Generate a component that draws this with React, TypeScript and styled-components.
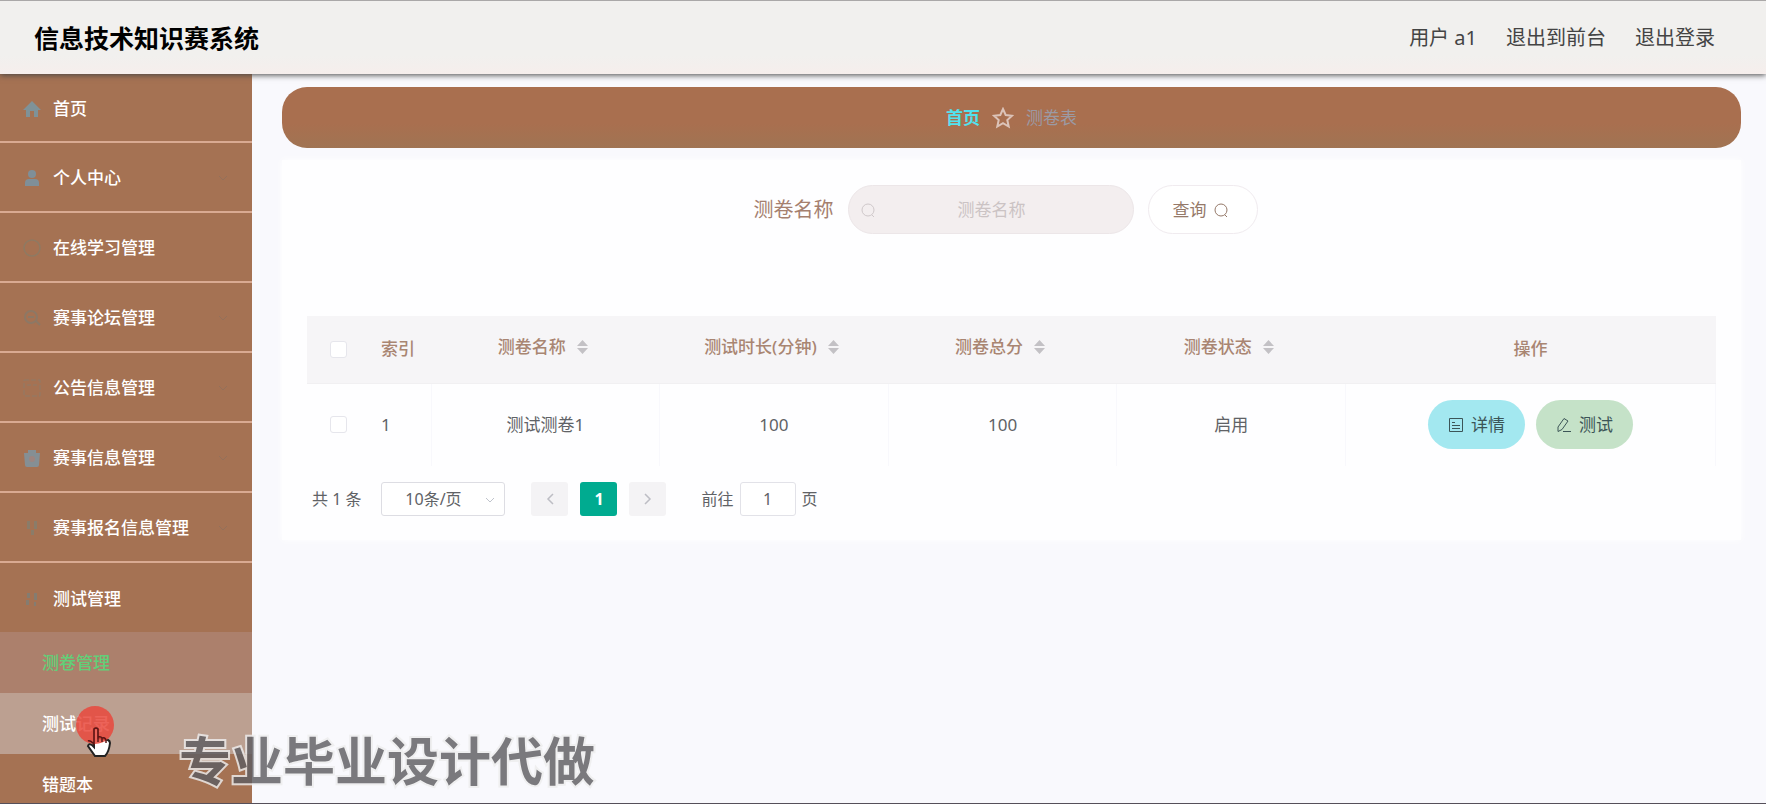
import React from 'react';
import styled, { createGlobalStyle, css } from 'styled-components';

const brown = '#a57253';

const GlobalStyle = createGlobalStyle`
  *, *::before, *::after { box-sizing: border-box; }
  html, body { margin: 0; }
  body {
    background: #f9f9fd;
    color: #606266;
    font-family: "Noto Sans", "Noto Sans CJK SC", sans-serif;
    font-size: 17px;
    line-height: 24px;
  }
  button, input, select { font: inherit; color: inherit; margin: 0; }
  a { color: inherit; text-decoration: none; }
`;

const Page = styled.div`
  position: relative;
  display: flex;
  flex-direction: column;
  height: 100vh;
  overflow: hidden;
  border-bottom: 1px solid #55505a;
`;

const Header = styled.header`
  flex: none;
  z-index: 1;
  display: flex;
  align-items: center;
  justify-content: space-between;
  height: 74px;
  padding: 0 51px 0 34px;
  border-top: 1px solid #aaa8a8;
  background: linear-gradient(#f1f0ee 75%, #f6eeec);
  box-shadow: 0 1px 6px #444;
`;

const Title = styled.h1`
  margin: 0;
  color: #000;
  font-size: 25px;
  line-height: 32px;
`;

const UserNav = styled.nav`
  display: flex;
  gap: 29px;
  color: #444;
  font-size: 20px;
  line-height: 28px;
`;

const Body = styled.div`
  flex: 1;
  display: flex;
  min-height: 0;
`;

const Sidebar = styled.nav`
  flex: none;
  width: 252px;
  overflow: hidden;
  background: ${brown};
  color: #fff;
  font-weight: 500;
`;

const MenuLink = styled.a<{ $plain?: boolean }>`
  display: flex;
  align-items: center;
  gap: 12px;
  height: ${p => (p.$plain ? 69 : 70)}px;
  padding: 2px 23px 0;
  ${p => !p.$plain && css`border-bottom: 2px solid #d9aa92;`}
  &:first-child { height: 69px; }
`;

const MenuIcon = styled.svg<{ $tone: string }>`
  flex: none;
  width: 18px;
  height: 18px;
  color: ${p => p.$tone};
`;

const MenuText = styled.span`
  flex: 1;
  white-space: nowrap;
`;

const Arrow = styled.svg`
  flex: none;
  width: 12px;
  height: 8px;
  color: #94705a;
`;

const SubLink = styled.a<{ $state?: 'active' | 'hover' }>`
  display: flex;
  align-items: center;
  height: 61px;
  padding-left: 42px;
  ${p => p.$state === 'active' && css`background: #ac806c; color: #62cf78;`}
  ${p => p.$state === 'hover' && css`background: #bca091;`}
`;

const Main = styled.main`
  flex: 1;
  min-width: 0;
  padding: 13px 25px 12px 30px;
`;

const Breadcrumb = styled.nav`
  display: flex;
  align-items: center;
  justify-content: center;
  gap: 12px;
  height: 61px;
  border-radius: 25px;
  background: linear-gradient(#a96f4f 60%, #a07453);
  color: #9b9aa4;
`;

const HomeLink = styled.a`
  color: #52e2ee;
  font-weight: 700;
`;

const Card = styled.section`
  margin-top: 12px;
  padding: 25px 25px 24px;
  background: #fefeff;
  box-shadow: 0 0 8px #fff;
`;

const SearchForm = styled.form`
  display: flex;
  align-items: center;
  justify-content: center;
  gap: 14px;
  margin-bottom: 82px;
  padding-right: 12px;
`;

const SearchLabel = styled.label`
  color: #a5806f;
  font-size: 20px;
  line-height: 28px;
`;

const SearchBox = styled.div`
  display: flex;
  align-items: center;
  width: 286px;
  height: 49px;
  padding: 0 11px;
  border: 1px solid #ece6e8;
  border-radius: 25px;
  background: #f3eeef;
  color: #cfc8ca;
`;

const SearchInput = styled.input`
  flex: 1;
  min-width: 0;
  padding: 0 14px 0 0;
  border: 0;
  outline: 0;
  background: transparent;
  text-align: center;
  &::placeholder { color: #cbc3c4; opacity: 1; }
`;

const SearchButton = styled.button`
  display: flex;
  align-items: center;
  justify-content: center;
  gap: 6px;
  width: 110px;
  height: 49px;
  padding: 0 10px 0 6px;
  border: 1px solid #f0ebef;
  border-radius: 25px;
  background: #fff;
  color: #957969;
`;

const Ring = styled.svg`
  flex: none;
  width: 16px;
  height: 16px;
`;

const Table = styled.table`
  width: 100%;
  border-collapse: collapse;
  table-layout: fixed;
`;

const Th = styled.th<{ $left?: boolean }>`
  height: 67px;
  padding: 0 12px;
  background: #f6f5f7;
  border-bottom: 1px solid #f1f0f2;
  color: #a98572;
  font-weight: 500;
  text-align: ${p => (p.$left ? 'left' : 'center')};
  white-space: nowrap;
`;

const Td = styled.td<{ $left?: boolean }>`
  height: 83px;
  padding: 0 12px;
  border-right: 1px solid #f8f8fc;
  text-align: ${p => (p.$left ? 'left' : 'center')};
  &:first-child { border-right: 0; }
`;

const Col = styled.col<{ $width?: number }>`
  width: ${p => (p.$width ? `${p.$width}px` : 'auto')};
`;

const CheckBox = styled.input`
  display: block;
  appearance: none;
  width: 17px;
  height: 17px;
  margin: 0 auto;
  border: 1px solid #e6e6ec;
  border-radius: 3px;
  background: #fff;
`;

const SortButton = styled.button`
  display: inline-flex;
  align-items: center;
  gap: 10px;
  padding: 0 4px 4px 0;
  border: 0;
  background: none;
`;

const SortIcon = styled.svg`
  width: 13px;
  height: 14px;
  color: #c3c1c5;
`;

const Actions = styled.div`
  display: flex;
  justify-content: center;
  gap: 11px;
`;

const ActionButton = styled.button<{ $bg: string }>`
  display: flex;
  align-items: center;
  justify-content: center;
  gap: 7px;
  width: 97px;
  height: 49px;
  padding: 0;
  border: 0;
  border-radius: 25px;
  background: ${p => p.$bg};
  color: #3c5557;
`;

const Pagination = styled.div`
  display: flex;
  align-items: center;
  margin-top: 16px;
  padding-left: 5px;
  font-size: 16px;
`;

const Total = styled.span`
  margin-right: 20px;
`;

const SizeWrap = styled.div`
  position: relative;
  width: 124px;
  margin-right: 26px;
`;

const SizeSelect = styled.select`
  appearance: none;
  display: block;
  width: 100%;
  height: 34px;
  padding: 0 20px 0 0;
  border: 1px solid #dddde3;
  border-radius: 3px;
  background: #fff;
  text-align: center;
  text-align-last: center;
`;

const SelectArrow = styled(Arrow)`
  position: absolute;
  right: 9px;
  top: 14px;
  color: #c0c4cc;
  pointer-events: none;
`;

const PageButton = styled.button<{ $active?: boolean }>`
  display: flex;
  align-items: center;
  justify-content: center;
  width: 37px;
  height: 34px;
  margin-right: 12px;
  padding: 0;
  border: 0;
  border-radius: 3px;
  background: ${p => (p.$active ? '#00ab90' : '#f4f3f5')};
  color: ${p => (p.$active ? '#fff' : '#bdbdc4')};
  font-weight: 700;
`;

const Jump = styled.label`
  display: flex;
  align-items: center;
  gap: 6px;
  margin-left: 23px;
`;

const JumpInput = styled.input`
  width: 56px;
  height: 34px;
  padding: 0;
  border: 1px solid #e2e2e8;
  border-radius: 3px;
  background: #fff;
  text-align: center;
`;

const Watermark = styled.div`
  position: absolute;
  left: 179px;
  bottom: 4px;
  color: #5f5e62;
  font-size: 52px;
  font-weight: 700;
  line-height: 76px;
  white-space: nowrap;
  -webkit-text-stroke: 4px #eeeeee;
  paint-order: stroke fill;
  opacity: 0.82;
  pointer-events: none;
`;

const Pointer = styled.svg`
  position: absolute;
  left: 75px;
  top: 705px;
  width: 42px;
  height: 54px;
  pointer-events: none;
`;

type IconName = 'home' | 'user' | 'circle' | 'chat' | 'frame' | 'bag' | 'trophy' | 'sliders';

const drawings: Record<IconName, React.ReactNode> = {
  home: <path d="M9 1 0 10h3v7h4v-6h4v6h4v-7h3z" fill="currentColor" />,
  user: (
    <g fill="currentColor">
      <circle cx="9" cy="5" r="4" />
      <path d="M2 17v-3q0-4 4-4h6q4 0 4 4v3z" />
    </g>
  ),
  circle: <circle cx="9" cy="9" r="8" fill="none" stroke="currentColor" strokeWidth="1.500" />,
  chat: (
    <g fill="none" stroke="currentColor" strokeWidth="2">
      <circle cx="8" cy="8" r="6" />
      <path d="M5 8h6M13 12l4 4" />
    </g>
  ),
  frame: <path d="M1 1h16v16H1zM4 6h4M10 6h4" fill="none" stroke="currentColor" strokeDasharray="5 2" />,
  bag: (
    <g>
      <path d="M1 4h16l-1 12q0 2-2 2H4q-2 0-2-2zM5 1h8v3H5z" fill="currentColor" />
      <circle cx="9" cy="10" r="3" fill="#9d8580" />
    </g>
  ),
  trophy: <path d="M4 2h3v8H4zM11 2h3v8h-3zM8 11h3v5H8z" fill="currentColor" />,
  sliders: <path d="M4 3h3v5H4zM3 10h3v5H3zM11 3h3v7h-3zM11 12h2v4h-2z" fill="currentColor" />,
};

const menu: { text: string; icon: IconName; tone: string; arrow: boolean }[] = [
  { text: '首页', icon: 'home', tone: '#7f9298', arrow: false },
  { text: '个人中心', icon: 'user', tone: '#7f8f98', arrow: true },
  { text: '在线学习管理', icon: 'circle', tone: '#8e7a63', arrow: false },
  { text: '赛事论坛管理', icon: 'chat', tone: '#8d7865', arrow: true },
  { text: '公告信息管理', icon: 'frame', tone: '#8f7a68', arrow: true },
  { text: '赛事信息管理', icon: 'bag', tone: '#858f94', arrow: true },
  { text: '赛事报名信息管理', icon: 'trophy', tone: '#8b7c69', arrow: true },
  { text: '测试管理', icon: 'sliders', tone: '#857c70', arrow: false },
];

const sortable = ['测卷名称', '测试时长(分钟)', '测卷总分', '测卷状态'];
const row = ['测试测卷1', '100', '100', '启用'];

const RingIcon = () => (
  <Ring viewBox="0 0 16 16" fill="none" stroke="currentColor" aria-hidden="true">
    <circle cx="8" cy="8" r="6" />
    <path d="m12 13 2 2" />
  </Ring>
);

export default function App() {
  return (
    <>
      <GlobalStyle />
      <Page>
        <Header>
          <Title>信息技术知识赛系统</Title>
          <UserNav>
            <span>用户 a1</span>
            <a href="#front">退出到前台</a>
            <a href="#logout">退出登录</a>
          </UserNav>
        </Header>
        <Body>
          <Sidebar>
            {menu.map((item, i) => (
              <MenuLink key={item.text} href="#menu" $plain={i === menu.length - 1}>
                <MenuIcon viewBox="0 0 18 18" $tone={item.tone} aria-hidden="true">
                  {drawings[item.icon]}
                </MenuIcon>
                <MenuText>{item.text}</MenuText>
                {item.arrow && (
                  <Arrow viewBox="0 0 12 8" fill="none" stroke="currentColor" aria-hidden="true">
                    <path d="m2 2 4 4 4-4" />
                  </Arrow>
                )}
              </MenuLink>
            ))}
            <SubLink href="#papers" $state="active">测卷管理</SubLink>
            <SubLink href="#records" $state="hover">测试记录</SubLink>
            <SubLink href="#mistakes">错题本</SubLink>
          </Sidebar>
          <Main>
            <Breadcrumb>
              <HomeLink href="#home">首页</HomeLink>
              <svg width="22" height="22" viewBox="0 0 22 22" fill="none" stroke="#dcc3b8" strokeWidth="2" aria-hidden="true">
                <path d="m11 2 2.700 6 6.300.7-4.700 4.300 1.400 6.500L11 16.200l-5.700 3.300 1.400-6.500L2 8.700 8.300 8z" />
              </svg>
              <span>测卷表</span>
            </Breadcrumb>
            <Card>
              <SearchForm>
                <SearchLabel htmlFor="paper-name">测卷名称</SearchLabel>
                <SearchBox>
                  <RingIcon />
                  <SearchInput id="paper-name" placeholder="测卷名称" />
                </SearchBox>
                <SearchButton type="button">查询<RingIcon /></SearchButton>
              </SearchForm>
              <Table>
                <colgroup>
                  <Col $width={62} />
                  <Col $width={62} />
                  <Col />
                  <Col />
                  <Col />
                  <Col />
                  <Col $width={370} />
                </colgroup>
                <thead>
                  <tr>
                    <Th><CheckBox type="checkbox" aria-label="全选" /></Th>
                    <Th $left>索引</Th>
                    {sortable.map(name => (
                      <Th key={name}>
                        <SortButton type="button">
                          {name}
                          <SortIcon viewBox="0 0 13 14" fill="currentColor" aria-hidden="true">
                            <path d="M6.500 0 12 6H1zM1 8h11l-5.500 6z" />
                          </SortIcon>
                        </SortButton>
                      </Th>
                    ))}
                    <Th>操作</Th>
                  </tr>
                </thead>
                <tbody>
                  <tr>
                    <Td><CheckBox type="checkbox" aria-label="选择" /></Td>
                    <Td $left>1</Td>
                    {row.map((value, i) => <Td key={i}>{value}</Td>)}
                    <Td>
                      <Actions>
                        <ActionButton type="button" $bg="#a3e8f0">
                          <svg width="16" height="16" viewBox="0 0 16 16" fill="none" stroke="currentColor" aria-hidden="true">
                            <path d="M1.500 1.500h13v13h-13zM4 5.500h3M4 8.500h8M4 11.500h8" />
                          </svg>
                          详情
                        </ActionButton>
                        <ActionButton type="button" $bg="#c5e2c8">
                          <svg width="16" height="16" viewBox="0 0 16 16" fill="none" stroke="currentColor" aria-hidden="true">
                            <path d="m2 10 6-8.500 4 2.500-6 8.500-4 2zM7 14.500h8" />
                          </svg>
                          测试
                        </ActionButton>
                      </Actions>
                    </Td>
                  </tr>
                </tbody>
              </Table>
              <Pagination>
                <Total>共 1 条</Total>
                <SizeWrap>
                  <SizeSelect aria-label="每页条数"><option>10条/页</option></SizeSelect>
                  <SelectArrow viewBox="0 0 12 8" fill="none" stroke="currentColor" aria-hidden="true">
                    <path d="m2 2 4 4 4-4" />
                  </SelectArrow>
                </SizeWrap>
                <PageButton type="button" aria-label="上一页">
                  <svg width="10" height="14" viewBox="0 0 10 14" fill="none" stroke="currentColor" strokeWidth="1.500"><path d="M8 2 3 7l5 5" /></svg>
                </PageButton>
                <PageButton type="button" $active>1</PageButton>
                <PageButton type="button" aria-label="下一页">
                  <svg width="10" height="14" viewBox="0 0 10 14" fill="none" stroke="currentColor" strokeWidth="1.500"><path d="m2 2 5 5-5 5" /></svg>
                </PageButton>
                <Jump>前往<JumpInput defaultValue="1" />页</Jump>
              </Pagination>
            </Card>
          </Main>
        </Body>
        <Watermark>专业毕业设计代做</Watermark>
        <Pointer viewBox="0 0 42 54" aria-hidden="true">
          <path d="M19 24q2-2 4 0v9l10 2q2 1 2 3-1 9-5 13H20l-7-10q1-3 4-1l2 2z" fill="#fff" stroke="#222" strokeWidth="2" />
          <circle cx="20" cy="20" r="19" fill="#e9483c" fillOpacity="0.850" />
          <path d="M13 36q2-1 6 3V24q2-2 4 0v8m0 5v-5q3-1 4 1v4m0-4q3-1 4 2v3" fill="none" stroke="#5a1414" strokeWidth="1.500" />
        </Pointer>
      </Page>
    </>
  );
}
